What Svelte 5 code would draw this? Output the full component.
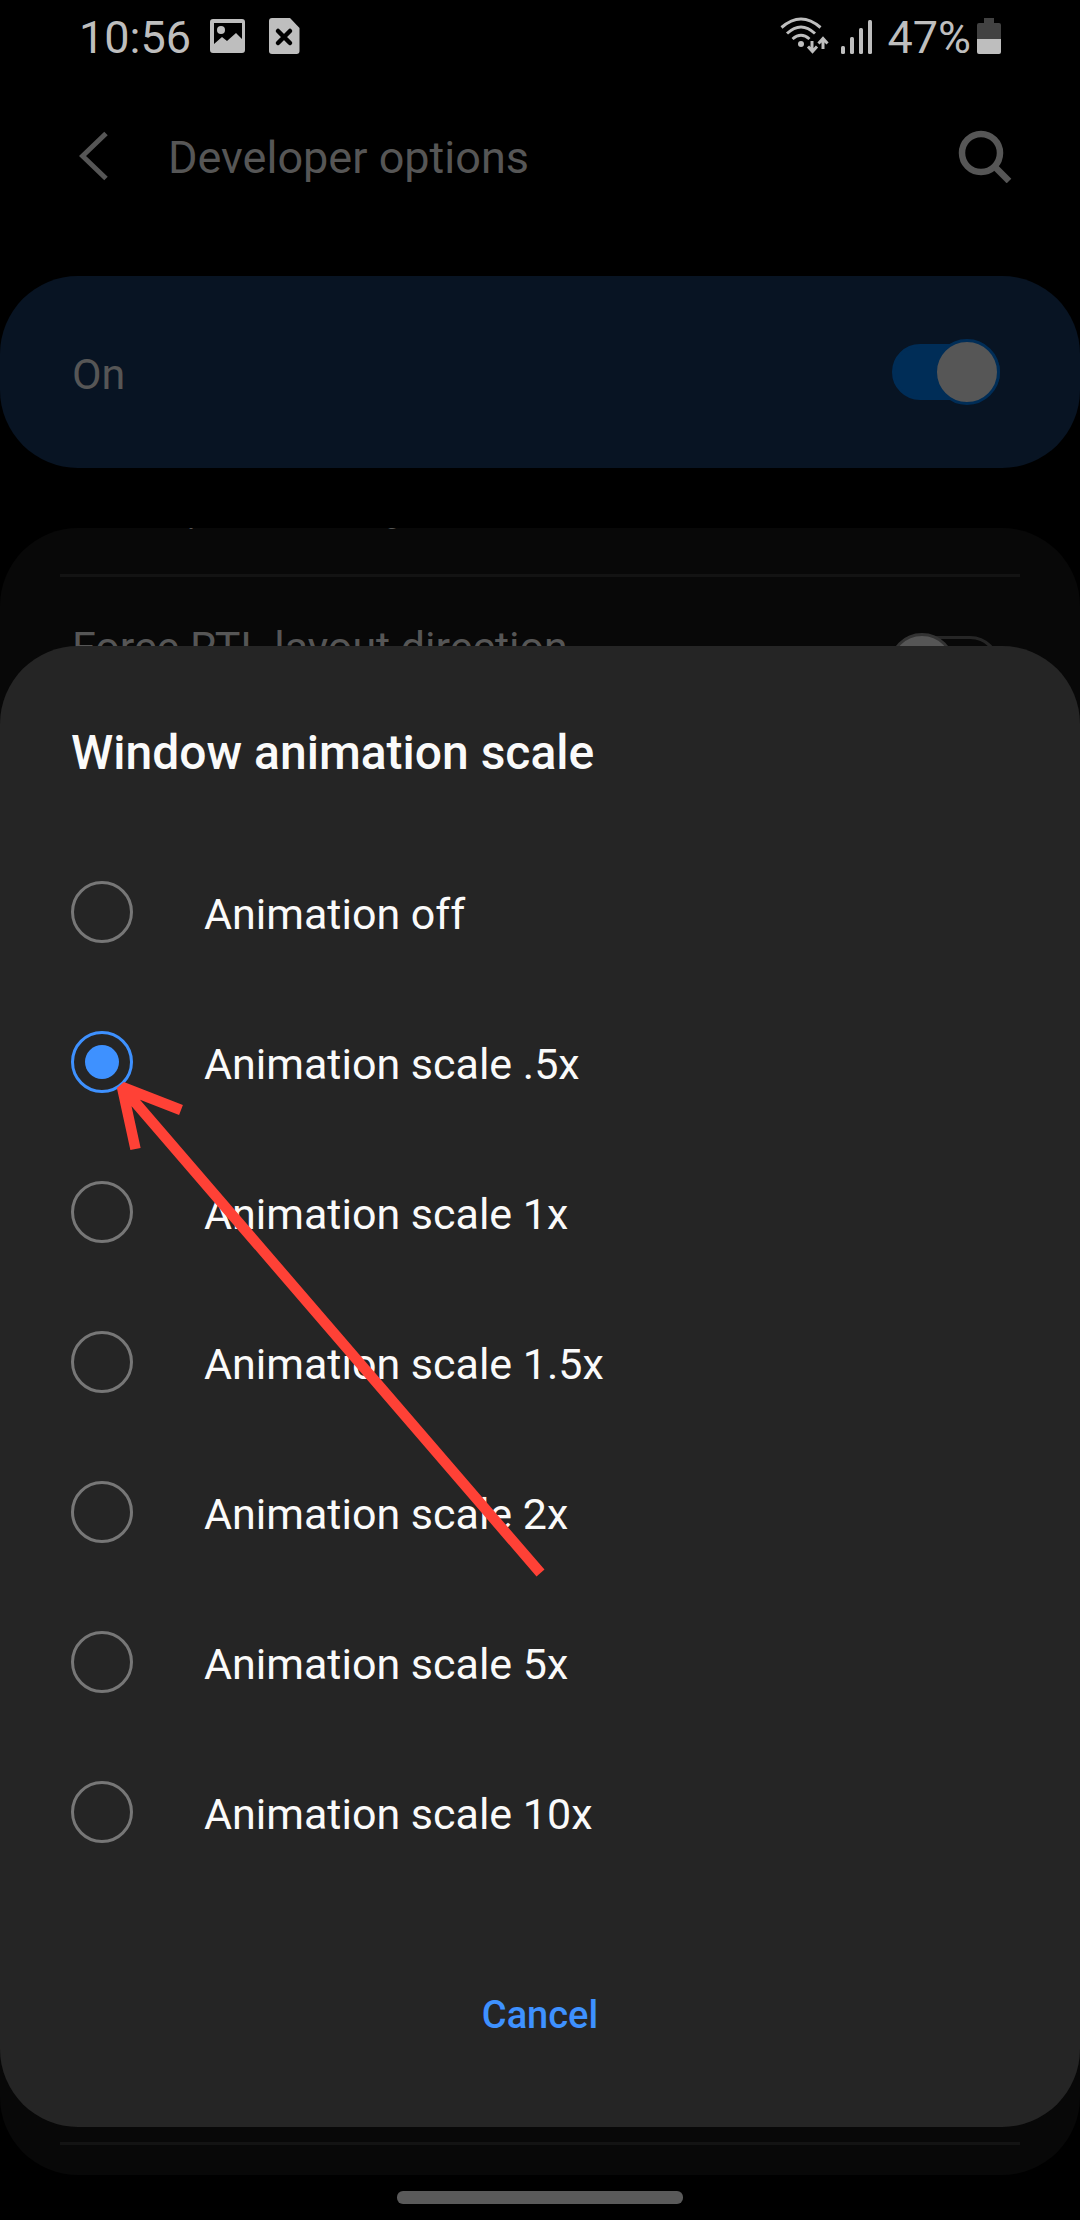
<script lang="ts">
	let developerMode = true
	let forceRtl = false
	let open = true

	let scale = '0.5'

	const scales = [
		{ value: '0', label: 'Animation off' },
		{ value: '0.5', label: 'Animation scale .5x' },
		{ value: '1', label: 'Animation scale 1x' },
		{ value: '1.5', label: 'Animation scale 1.5x' },
		{ value: '2', label: 'Animation scale 2x' },
		{ value: '5', label: 'Animation scale 5x' },
		{ value: '10', label: 'Animation scale 10x' }
	]
</script>

<div class="screen">
	<div class="status">
		<span class="text">10:56</span>
		<svg class="picture" width="36" height="36" viewBox="0 0 36 36" aria-hidden="true">
			<path
				fill-rule="evenodd"
				d="M3 1h29a3 3 0 0 1 3 3v28a3 3 0 0 1-3 3H3a3 3 0 0 1-3-3V4a3 3 0 0 1 3-3zM4 5v21l8-7 5 4 9-8 6 6V5z"
			/>
			<circle cx="11" cy="12" r="4" />
		</svg>
		<svg width="31" height="36" viewBox="0 0 31 36" aria-hidden="true">
			<path d="M3 0h18l9.500 10v23a3 3 0 0 1-3 3H3a3 3 0 0 1-3-3V3a3 3 0 0 1 3-3z" />
			<path d="M9 13l12 12M21 13L9 25" fill="none" stroke="#000" stroke-width="4.500" stroke-linecap="round" />
		</svg>

		<div class="indicators">
			<svg width="50" height="38" viewBox="0 0 50 38" aria-hidden="true">
				<g fill="none" stroke="currentColor" stroke-width="3">
					<path d="M1.500 10.500Q21 -6.500 40.500 10.500" />
					<path d="M7 16.500Q21 3.500 35 16.500" />
					<path d="M12.500 22Q21 14.500 29.500 22" />
					<path d="M32 24v9M28 29.500l4.500 5 4.500-5M43 32v-9M38.500 26.500l4.500-5 4.500 5" />
				</g>
				<circle cx="21" cy="27" r="3" />
			</svg>
			<svg class="signal" width="32" height="36" viewBox="0 0 32 36" aria-hidden="true">
				<rect y="28" width="4" height="8" rx="1.500" />
				<rect x="9" y="19" width="4" height="17" rx="1.500" />
				<rect x="18" y="10" width="4" height="26" rx="1.500" />
				<rect x="27" y="2" width="4" height="34" rx="1.500" />
			</svg>
			<span class="text">47%</span>
			<svg class="battery" width="24" height="36" viewBox="0 0 24 36" aria-hidden="true">
				<path d="M7 0h10v5h5a2 2 0 0 1 2 2v14H0V7a2 2 0 0 1 2-2h5z" fill="#424242" />
				<path d="M0 21h24v13a2 2 0 0 1-2 2H2a2 2 0 0 1-2-2z" />
			</svg>
		</div>
	</div>

	<header>
		<button class="icon" type="button" aria-label="Back">
			<svg width="30" height="50" viewBox="0 0 30 50">
				<path d="M27 2.500L3.500 25 27 47.500" fill="none" stroke="currentColor" stroke-width="5" />
			</svg>
		</button>
		<h1 class="text">Developer options</h1>
		<button class="icon" type="button" aria-label="Search">
			<svg width="54" height="54" viewBox="0 0 54 54">
				<g fill="none" stroke="currentColor" stroke-width="6.500">
					<circle cx="23" cy="24" r="19" />
					<path d="M36 37l15 15" />
				</g>
			</svg>
		</button>
	</header>

	<label class="banner">
		<span class="text">On</span>
		<input class="switch" type="checkbox" role="switch" bind:checked={developerMode} />
	</label>

	<main>
		<!-- the list is scrolled, only the tail of the first row is in view -->
		<div class="list">
			<p class="hint">Show clip bounds, margins, etc.</p>
			<label class="setting">
				<span class="text">Force RTL layout direction</span>
				<input class="switch" type="checkbox" role="switch" bind:checked={forceRtl} />
			</label>
		</div>
		<hr />
	</main>

	<div class="gesture"><span></span></div>

	{#if open}
		<div class="sheet" role="dialog" aria-labelledby="sheet-title">
			<h2 id="sheet-title">Window animation scale</h2>

			<div class="options" role="radiogroup" aria-labelledby="sheet-title">
				{#each scales as { value, label }}
					<label class="option">
						<input type="radio" name="scale" {value} bind:group={scale} />
						<span class="text">{label}</span>
					</label>
				{/each}

				<svg class="arrow" width="440" height="510" viewBox="110 1077 440 510" aria-hidden="true">
					<path d="M540.500 1573L122 1087M181 1110L122 1087L135.500 1149" />
				</svg>
			</div>

			<button class="cancel" type="button" on:click={() => (open = false)}>Cancel</button>
		</div>
	{/if}
</div>

<style>
	:global(body) {
		margin: 0;
		background: #000;
	}

	.screen {
		position: relative;
		display: flex;
		flex-direction: column;
		min-height: 100vh;
		overflow: hidden;
		font-family: Roboto, 'Noto Sans', sans-serif;
		font-size: 43px;
		line-height: 56px;
		color: #565656;
		background: #000;
	}

	button {
		padding: 0;
		border: 0;
		font: inherit;
		color: inherit;
		background: none;
		cursor: pointer;
	}

	svg {
		display: block;
		flex: none;
		fill: currentColor;
	}

	/* optical centring next to icons and controls */
	.text {
		padding-top: 4px;
	}

	.status {
		display: flex;
		align-items: center;
		height: 72px;
		padding: 0 79px;
		font-size: 45px;
		color: #bebebe;
	}

	.picture {
		margin: 0 23px 0 19px;
	}

	.indicators {
		display: flex;
		align-items: center;
		margin-left: auto;
	}

	.signal {
		margin: 0 14px 0 11px;
	}

	.battery {
		margin-left: 6px;
	}

	header {
		display: flex;
		align-items: center;
		height: 168px;
		padding: 0 68px 36px 79px;
	}

	h1 {
		flex: 1;
		margin: 0 0 0 59px;
		font-size: 45px;
		font-weight: 400;
	}

	.banner,
	.setting {
		display: flex;
		align-items: center;
		justify-content: space-between;
	}

	.banner {
		height: 192px;
		padding: 0 80px 0 72px;
		border-radius: 78px;
		background: #081423;
	}

	.switch {
		position: relative;
		width: 108px;
		height: 56px;
		margin: 0;
		border: 3px solid #262626;
		border-radius: 28px;
		box-sizing: border-box;
		appearance: none;
	}

	.switch::before {
		content: '';
		position: absolute;
		top: -8px;
		left: -6px;
		width: 60px;
		height: 60px;
		border: 3px solid #333;
		border-radius: 50%;
		background: #565656;
	}

	.switch:checked {
		border-color: #002d57;
		background: #002d57;
	}

	.switch:checked::before {
		left: 39px;
		border-color: #002d57;
	}

	main {
		display: flex;
		flex: 1;
		flex-direction: column;
		justify-content: space-between;
		margin-top: 60px;
		padding: 0 60px 30px;
		overflow: hidden;
		border-radius: 78px;
		background: #080808;
	}

	.list {
		margin-top: -39px;
	}

	.hint {
		margin: 0;
		padding: 0 12px 37px;
		font-size: 31px;
		line-height: 48px;
		color: #565656;
	}

	.setting {
		height: 136px;
		padding: 0 20px 0 12px;
		border-top: 3px solid #131313;
	}

	.setting .switch {
		height: 60px;
		margin-top: 42px;
		border-radius: 30px;
	}

	.setting .switch::before {
		top: -6px;
	}

	hr {
		width: 100%;
		height: 3px;
		margin: 0;
		border: 0;
		background: #131313;
	}

	.gesture {
		display: flex;
		justify-content: center;
		padding: 16px 0;
	}

	.gesture span {
		width: 286px;
		height: 13px;
		border-radius: 6px;
		background: #5a5a5a;
	}

	.sheet {
		position: absolute;
		right: 0;
		bottom: 93px;
		left: 0;
		display: flex;
		flex-direction: column;
		padding: 79px 71px 70px;
		border-radius: 78px;
		color: #fafafa;
		background: #252525;
	}

	h2 {
		margin: 0 0 56px;
		font-size: 48px;
		font-weight: 500;
	}

	.options {
		position: relative;
	}

	.option {
		display: flex;
		align-items: center;
		gap: 71px;
		height: 150px;
	}

	.option input {
		display: grid;
		place-items: center;
		width: 62px;
		height: 62px;
		margin: 0;
		border: 3px solid #777;
		border-radius: 50%;
		box-sizing: border-box;
		appearance: none;
	}

	.option input:checked {
		border-color: #3e91ff;
	}

	.option input:checked::before {
		content: '';
		width: 34px;
		height: 34px;
		border-radius: 50%;
		background: #3e91ff;
	}

	.arrow {
		position: absolute;
		top: 240px;
		left: 39px;
		fill: none;
		stroke: #ff4136;
		stroke-width: 10.500;
		stroke-linejoin: bevel;
		pointer-events: none;
	}

	.cancel {
		align-self: center;
		height: 84px;
		margin-top: 86px;
		padding: 0 48px;
		font-size: 38px;
		font-weight: 500;
		color: #3e91ff;
	}
</style>
